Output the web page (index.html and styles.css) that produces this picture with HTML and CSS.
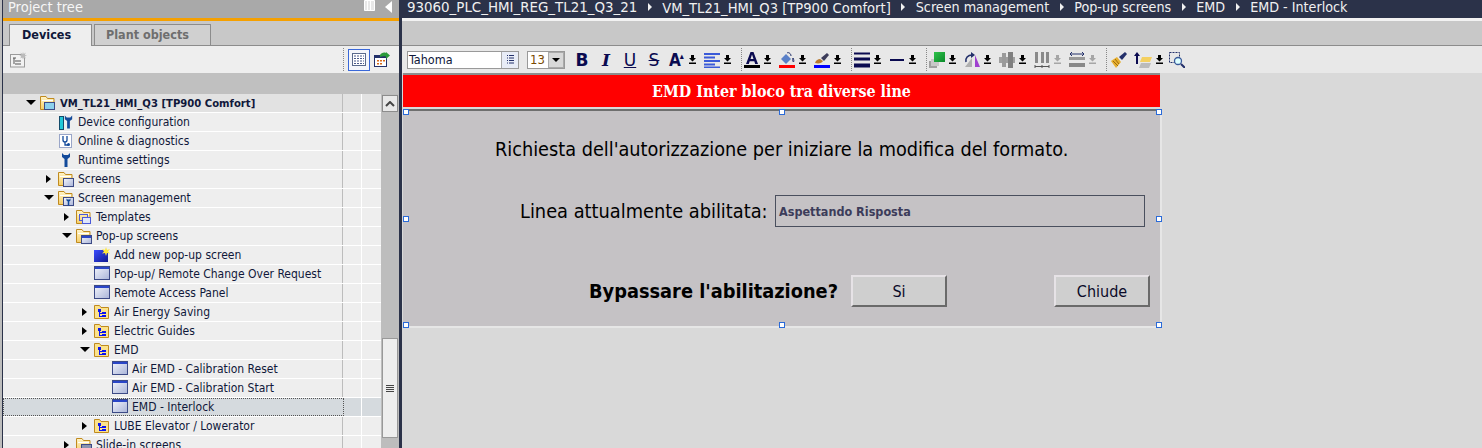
FILE: index.html
```html
<!DOCTYPE html>
<html lang="en">
<head>
<meta charset="utf-8">
<title>Project tree</title>
<link rel="stylesheet" href="styles.css">
</head>
<body>
<svg class="defs" width="0" height="0" aria-hidden="true">
  <defs>
    <linearGradient id="win" x1="0" y1="0" x2="1" y2="1"><stop offset="0" stop-color="#f4f6fc"/><stop offset="1" stop-color="#a9b4d8"/></linearGradient>
    <linearGradient id="blu" x1="0" y1="0" x2="1" y2="1"><stop offset="0" stop-color="#3a4cff"/><stop offset="1" stop-color="#101a90"/></linearGradient>
    <linearGradient id="grn" x1="0" y1="0" x2="1" y2="1"><stop offset="0" stop-color="#2fc24a"/><stop offset="1" stop-color="#0a8a2a"/></linearGradient>
    <linearGradient id="fold" x1="0" y1="0" x2="0" y2="1"><stop offset="0" stop-color="#fff4c8"/><stop offset="1" stop-color="#f6cf6a"/></linearGradient>
    <symbol id="folder" viewBox="0 0 16 16"><path d="M.5 1.500h5.500l1.500 2h6.500v11H.5z" fill="url(#fold)" stroke="#c08a1e"/><path d="M2 5.500h11" stroke="#fff" fill="none"/></symbol>
    <symbol id="window" viewBox="0 0 16 16"><rect x=".5" y=".5" width="15" height="13" fill="url(#win)" stroke="#3c4a86"/><rect x="1" y="1" width="14" height="2" fill="#2a46c8"/></symbol>
    <symbol id="treefold" viewBox="0 0 16 16"><path d="M.5 1.500h5l1.500 2h7.500v11H.5z" fill="#fbe28c" stroke="#c08a1e"/><g fill="#0a12f0"><rect x="4" y="5" width="3" height="3"/><rect x="8" y="8" width="4" height="2"/><rect x="8" y="11" width="4" height="2"/><rect x="5" y="8" width="1" height="5"/><rect x="5" y="9" width="3" height="1"/><rect x="5" y="12" width="3" height="1"/></g></symbol>
    <symbol id="down" viewBox="0 0 7 9"><path d="M2 0h3v3h2L3.500 6.500 0 3h2zM0 7.500h7V9H0z" fill="#000"/></symbol>
    <symbol id="downg" viewBox="0 0 7 9"><path d="M2 0h3v3h2L3.500 6.500 0 3h2zM0 7.500h7V9H0z" fill="#a6a6a6"/></symbol>
    <symbol id="wrench" viewBox="0 0 12 16"><path d="M2 1v4l2.500 2v8h3V7L10 5V1L8 3H4z" fill="#134a9a"/></symbol>
  </defs>
</svg>

<div class="app">
  <aside class="tree-panel">
    <header class="panel-head">
      <span class="panel-title">Project tree</span>
      <svg class="pin" width="11" height="11" viewBox="0 0 11 11"><path d="M.5.5h10v10H.5zM3.500.5v10M6.500.5v10" fill="#e8e8e8" stroke="#fff"/></svg>
      <svg class="collapse" width="7" height="12" viewBox="0 0 7 12"><path d="M7 0v12L0 6z" fill="#fff"/></svg>
    </header>
    <div class="orange"></div>
    <div class="tabs">
      <span class="tab active">Devices</span>
      <span class="tab">Plant objects</span>
    </div>
    <div class="tree-tools">
      <svg class="tt-add" width="17" height="16" viewBox="0 0 17 16"><rect x=".5" y="2.500" width="14" height="12.500" fill="#f2f2f2" stroke="#9a9a9a"/><path d="M3 6h3M5 9h6M5 12h6M4 6v6" stroke="#555"/><path d="M13 0l.8 2 2-1.500-1 2.500 2.200.5-2.200 1 1.200 2-2.200-1-.8 2-.8-2-2 1 1-2-2-1 2.200-.5-1-2.500 2 1.500z" fill="#bbb"/></svg>
      <i class="tt-spacer"></i>
      <i class="tt-sep"></i>
      <span class="tt-btn">
        <svg width="14" height="13" viewBox="0 0 14 13"><rect x=".5" y=".5" width="13" height="12" fill="#fff" stroke="#5a6a8c"/><path d="M2 3h10M2 5.500h10M2 8h10M2 10.500h10" stroke="#4a5a8a" stroke-dasharray="2 1"/></svg>
      </span>
      <svg class="tt-cal" width="17" height="16" viewBox="0 0 17 16"><rect x=".5" y="3.500" width="12" height="11" fill="#fff" stroke="#23306a"/><rect x="1" y="4" width="11" height="2" fill="#23306a"/><path d="M3 8h2v1.500H3zM6 8h2v1.500H6zM9 8h2v1.500H9zM3 11h2v1.500H3zM6 11h2v1.500H6z" fill="#d86a1a"/><path d="M6 3c1-2 4-3 6-2V0l4 3.500-4 3.500V4.500C10 4 8 4 6 5z" fill="#2a9a3a"/></svg>
    </div>
    <div class="tree-band"></div>
    <div class="tree-body">
      <ul class="tree">
        <li class="row top l0"><span class="tw open"></span><svg class="ic"><use href="#folder"/><rect x="4.500" y="7.500" width="10" height="7" fill="#8cd0ec" stroke="#3c4a86"/></svg><b class="lbl">VM_TL21_HMI_Q3 [TP900 Comfort]</b></li>
        <li class="row l1"><span class="tw"></span><svg class="ic"><rect x="1.500" y="2.500" width="4" height="13" fill="#22c8d8" stroke="#134a6a"/><use href="#wrench" x="5" width="11" height="16"/></svg><span class="lbl">Device configuration</span></li>
        <li class="row l1"><span class="tw"></span><svg class="ic"><rect x="1.500" y="1.500" width="12" height="13" fill="#fff" stroke="#9aa6c8"/><path d="M5 3v4a2 2 0 0 0 4 0V3M7 9v3h3" fill="none" stroke="#134a9a" stroke-width="1.300"/><circle cx="10.500" cy="11.500" r="1.500" fill="#134a9a"/></svg><span class="lbl">Online &amp; diagnostics</span></li>
        <li class="row l1"><span class="tw"></span><svg class="ic"><use href="#wrench" x="2" width="12" height="16"/></svg><span class="lbl">Runtime settings</span></li>
        <li class="row l1"><span class="tw shut"></span><svg class="ic"><use href="#folder"/><rect x="5.500" y="7.500" width="10" height="8" fill="url(#win)" stroke="#3c4a86"/></svg><span class="lbl">Screens</span></li>
        <li class="row l1"><span class="tw open"></span><svg class="ic"><use href="#folder"/><rect x="5.500" y="7.500" width="10" height="8" fill="url(#win)" stroke="#3c4a86"/><use href="#wrench" x="7" y="8" width="7" height="8"/></svg><span class="lbl">Screen management</span></li>
        <li class="row l2"><span class="tw shut"></span><svg class="ic"><use href="#folder"/><rect x="3.500" y="5.500" width="8" height="6" fill="none" stroke="#4a5ad8"/><rect x="6.500" y="8.500" width="8" height="6" fill="#dfe6fa" stroke="#4a5ad8"/></svg><span class="lbl">Templates</span></li>
        <li class="row l2"><span class="tw open"></span><svg class="ic"><use href="#folder"/><rect x="5.500" y="7.500" width="10" height="8" fill="url(#win)" stroke="#3c4a86"/><rect x="6" y="8" width="9" height="2" fill="#2a46c8"/></svg><span class="lbl">Pop-up screens</span></li>
        <li class="row l3"><span class="tw"></span><svg class="ic"><rect x="0" y="3" width="14" height="12" fill="url(#blu)"/><path d="M12 0l1 3 3-1-2 2.500 2 2-3-.5-1 3-1-3-3 .5 2-2-2-2.500 3 1z" fill="#ffe83a"/></svg><span class="lbl">Add new pop-up screen</span></li>
        <li class="row l3"><span class="tw"></span><svg class="ic"><use href="#window"/></svg><span class="lbl">Pop-up/ Remote Change Over Request</span></li>
        <li class="row l3"><span class="tw"></span><svg class="ic"><use href="#window"/></svg><span class="lbl">Remote Access Panel</span></li>
        <li class="row l3"><span class="tw shut"></span><svg class="ic"><use href="#treefold"/></svg><span class="lbl">Air Energy Saving</span></li>
        <li class="row l3"><span class="tw shut"></span><svg class="ic"><use href="#treefold"/></svg><span class="lbl">Electric Guides</span></li>
        <li class="row l3"><span class="tw open"></span><svg class="ic"><use href="#treefold"/></svg><span class="lbl">EMD</span></li>
        <li class="row l4"><span class="tw"></span><svg class="ic"><use href="#window"/></svg><span class="lbl">Air EMD - Calibration Reset</span></li>
        <li class="row l4"><span class="tw"></span><svg class="ic"><use href="#window"/></svg><span class="lbl">Air EMD - Calibration Start</span></li>
        <li class="row l4 selected"><span class="tw"></span><svg class="ic"><use href="#window"/></svg><span class="lbl">EMD - Interlock</span></li>
        <li class="row l3"><span class="tw shut"></span><svg class="ic"><use href="#treefold"/></svg><span class="lbl">LUBE Elevator / Lowerator</span></li>
        <li class="row l2"><span class="tw shut"></span><svg class="ic"><use href="#folder"/><rect x="5.500" y="7.500" width="10" height="8" fill="#8a94b0" stroke="#3c4a86"/></svg><span class="lbl">Slide-in screens</span></li>
      </ul>
      <div class="scrollbar">
        <span class="sb-up"><svg width="10" height="6" viewBox="0 0 10 6"><path d="M1 5l4-4 4 4" fill="none" stroke="#444" stroke-width="2"/></svg></span>
        <span class="sb-thumb"><i></i><i></i><i></i><i></i></span>
      </div>
    </div>
  </aside>

  <main class="editor">
    <nav class="crumbs">
      <span class="cr-num">93060_PLC_HMI_REG_TL21_Q3_21</span><i></i>
      <span class="cr-dev">VM_TL21_HMI_Q3 [TP900 Comfort]</span><i></i>
      <span>Screen management</span><i></i>
      <span>Pop-up screens</span><i></i>
      <span>EMD</span><i></i>
      <span>EMD - Interlock</span>
    </nav>
    <div class="crumb-gap"></div>
    <div class="ed-band"></div>
    <div class="format-bar">
      <span class="fontbox"><span class="fb-text">Tahoma</span><span class="fb-btn"><svg width="9" height="11" viewBox="0 0 9 11"><path d="M1 1.500h1M3 1.500h5M1 4h1M3 4h5M1 6.500h1M3 6.500h5M1 9h1M3 9h5" stroke="#23306a"/></svg></span></span>
      <span class="sizebox"><span class="sz-text">13</span><span class="sz-btn"><svg width="8" height="4" viewBox="0 0 8 4"><path d="M0 0h8L4 4z" fill="#000"/></svg></span></span>
      <b class="fmt f-b">B</b><i class="fmt f-i">I</i><u class="fmt f-u">U</u><s class="fmt f-s">S</s>
      <span class="tool first"><span class="glyph-a">A<sup>▴</sup></span><svg class="arr"><use href="#down"/></svg></span>
      <span class="tool"><svg class="t16" viewBox="0 0 16 16"><path d="M0 2h16M0 5.500h11M0 9h16M0 12.500h11M0 15.500h16" stroke="#3a5ad8" stroke-width="2"/></svg><svg class="arr"><use href="#down"/></svg></span>
      <i class="sep"></i>
      <span class="tool"><svg class="t16" viewBox="0 0 16 16"><path d="M6.500 0h3L14 12h-2.800l-.9-2.700H5.700L4.800 12H2zM6.500 7h3L8 2.500z" fill="#0a0a50"/><rect y="13" width="16" height="3" fill="#000"/></svg><svg class="arr"><use href="#down"/></svg></span>
      <span class="tool"><svg class="t16" viewBox="0 0 16 16"><path d="M2 7l5-5 5 5-5 5z" fill="#5a80c8"/><path d="M8 1c1-1 4 0 4 3M14 6c1 2 1 3 .5 4-1-1-1-2-.5-4z" fill="none" stroke="#23306a"/><rect y="13" width="16" height="3" fill="#f00"/></svg><svg class="arr"><use href="#down"/></svg></span>
      <span class="tool"><svg class="t16" viewBox="0 0 16 16"><path d="M1 11c1-3 3-4 5-4l3 2c-1 2-4 3-8 2z" fill="#b87a30"/><path d="M7 6l6-5 2 2-5 6z" fill="#3c3c5a"/><rect y="13" width="16" height="3" fill="#00f"/></svg><svg class="arr"><use href="#down"/></svg></span>
      <i class="sep"></i>
      <span class="tool"><svg class="t16" viewBox="0 0 16 16"><path d="M0 1.500h16" stroke="#0a0a50" stroke-width="2"/><path d="M0 7h16" stroke="#0a0a50" stroke-width="3"/><path d="M0 13.500h16" stroke="#0a0a50" stroke-width="4"/></svg><svg class="arr"><use href="#down"/></svg></span>
      <span class="tool"><svg class="t16" viewBox="0 0 16 16"><path d="M1 8h14" stroke="#0a0a50" stroke-width="2"/></svg><svg class="arr"><use href="#down"/></svg></span>
      <i class="sep"></i>
      <span class="tool"><svg class="t16" viewBox="0 0 16 16"><rect y="9" width="8" height="7" fill="#a0a0a0"/><rect x="2" y="7" width="8" height="7" fill="#c8c8c8"/><rect x="5" y="0" width="11" height="10" fill="url(#grn)"/></svg><svg class="arr"><use href="#down"/></svg></span>
      <span class="tool"><svg class="t16" viewBox="0 0 16 16"><path d="M8 15H1l7-9z" fill="#b0b0b0"/><path d="M11 3l5 12h-5z" fill="#a040d0"/><path d="M2 10c-1-4 2-7 6-7" fill="none" stroke="#23306a" stroke-width="1.600"/><path d="M7 0l4 3-4 3z" fill="#23306a"/></svg><svg class="arr"><use href="#down"/></svg></span>
      <span class="tool"><svg class="t16" viewBox="0 0 16 16"><rect y="5" width="16" height="6" fill="#a0a0a0"/><rect x="3" y="1" width="4" height="14" fill="#9a9a9a"/><rect x="9" y="0" width="5" height="16" fill="#808080"/></svg><svg class="arr"><use href="#down"/></svg></span>
      <span class="tool"><svg class="t16" viewBox="0 0 16 16"><path d="M1 0h3v11H1zM7 0h3v11H7zM12 0h3v11h-3z" fill="#8a8a8a"/><path d="M1 14.500h14M1 13v3M8 13v3M15 13v3" stroke="#555"/></svg><svg class="arr"><use href="#downg"/></svg></span>
      <span class="tool"><svg class="t16" viewBox="0 0 16 16"><rect y="5" width="16" height="3" fill="#999"/><rect y="11" width="16" height="4" fill="#888"/><path d="M1 2h14M1 2l2-2M1 2l2 2M15 2l-2-2M15 2l-2 2" stroke="#23306a"/></svg><svg class="arr"><use href="#downg"/></svg></span>
      <i class="sep"></i>
      <svg class="t16 broom" viewBox="0 0 16 16"><path d="M0 9l6-4 4 5-5 6z" fill="#e8b030"/><path d="M2 9l5 5M4 7l4 5" stroke="#9a6a10"/><path d="M8 5l6-5 2 2-5 6z" fill="#23306a"/></svg>
      <span class="tool order"><svg class="t16 wide" viewBox="0 0 18 16"><path d="M3 0l3 4H4v8H2V4H0z" fill="#0a0a50"/><path d="M8 5h10l-2 5H6z" fill="#f4d060"/><path d="M7 11h10l-2 5H5z" fill="#bbb"/></svg><svg class="arr"><use href="#down"/></svg></span>
      <svg class="t16 zoomico" viewBox="0 0 16 16"><rect x=".5" y=".5" width="10" height="10" fill="none" stroke="#23306a" stroke-dasharray="2 1"/><circle cx="9" cy="9" r="3.500" fill="#dff" stroke="#3a5a9a" stroke-width="1.300"/><path d="M12 12l4 4" stroke="#23306a" stroke-width="2"/></svg>
    </div>

    <section class="canvas">
      <div class="screen">
        <div class="titlebar">EMD Inter bloco tra diverse line</div>
        <div class="popup">
          <p class="msg">Richiesta dell'autorizzazione per iniziare la modifica del formato.</p>
          <div class="line-row">
            <span class="line-lbl">Linea attualmente abilitata:</span>
            <span class="iofield">Aspettando Risposta</span>
          </div>
          <div class="act-row">
            <strong class="ask">Bypassare l'abilitazione?</strong>
            <span class="btn">Si</span>
            <span class="btn btn-end">Chiude</span>
          </div>
          <i class="h h1"></i><i class="h h2"></i><i class="h h3"></i>
          <i class="h h4"></i><i class="h h5"></i>
          <i class="h h6"></i><i class="h h7"></i><i class="h h8"></i>
        </div>
      </div>
    </section>
  </main>
</div>
</body>
</html>
```
FILE: styles.css
```css
* { box-sizing: border-box; }
html, body { margin: 0; height: 100%; overflow: hidden; }
body { font-family: "DejaVu Sans Condensed", "DejaVu Sans", sans-serif; font-size: 12px; color: #10183a; background: #d9d9d9; }
.defs { position: absolute; }
.app { display: flex; height: 448px; padding-left: 2px; background: #bdbdbd; }

/* left panel */
.tree-panel { width: 397px; flex: none; display: flex; flex-direction: column; background: #c0c0c0; border-left: 1px solid #2b3249; }
.panel-head { height: 18px; background: #a9a9a9; display: flex; align-items: flex-start; padding-left: 5px; color: #f6f6f6; font-size: 14.500px; }
.panel-title { flex: 1; line-height: 14px; }
.pin { margin-right: 10px; }
.collapse { margin: 1px 7px 0 0; }
.orange { height: 3px; background: #f5a000; }
.tabs { height: 25px; background: #c8c8c8; display: flex; align-items: flex-end; padding-left: 6px; gap: 1px; border-bottom: 1px solid #8c8c8c; }
.tab { height: 21px; width: 117px; padding: 0 0 2px 11px; font-size: 12.500px; font-weight: bold; color: #6e6e6e; border: 1px solid #8c8c8c; border-bottom: 0; display: flex; align-items: center; background: #d0d0d0; }
.tab.active { width: 83px; height: 22px; margin: 0 1px -1px 0; padding-left: 12px; color: #10183a; background: #eee; }
.tree-tools { height: 27px; background: #eee; display: flex; align-items: center; padding: 0 8px 0 7px; }
.tt-spacer { flex: 1; }
.tt-sep { width: 1px; height: 23px; border-left: 1px dotted #888; margin-right: 4px; }
.tt-btn { width: 22px; height: 22px; border: 1px solid #3a68d8; background: #f4f6fa; display: flex; align-items: center; justify-content: center; margin-right: 4px; }
.tree-band { height: 21px; background: #c0c0c0; }
.tree-body { flex: 1; display: flex; min-height: 0; overflow: hidden; }
.tree { list-style: none; margin: 0; padding: 0; width: 378px; flex: none; }
.row { height: 19px; display: flex; align-items: center; background: #eee; border-bottom: 1px solid #fff; position: relative; font-size: 12px; }
.row::before { content: ""; position: absolute; left: 339px; top: 0; bottom: 0; width: 1px; background: #bcbcbc; }
.row::after { content: ""; position: absolute; left: 358px; top: 0; bottom: 0; width: 1px; background: #fff; }
.row.top { background: #e2e2e2; }
.row.selected { background: #d5dade; }
.row.selected::before { left: 0; width: 339px; background: none; border: 1px dotted #555; }
.l0 { padding-left: 23px; }
.l1 { padding-left: 41px; }
.l2 { padding-left: 59px; }
.l3 { padding-left: 77px; }
.l4 { padding-left: 95px; }
.tw { width: 14px; height: 10px; flex: none; position: relative; }
.tw.open::before { content: ""; position: absolute; left: 0; top: 2px; border-left: 5px solid transparent; border-right: 5px solid transparent; border-top: 5px solid #000; }
.tw.shut::before { content: ""; position: absolute; left: 2px; top: 1px; border-top: 4px solid transparent; border-bottom: 4px solid transparent; border-left: 5px solid #000; }
.ic { width: 16px; height: 16px; flex: none; margin-right: 4px; }
.lbl { font-weight: normal; white-space: nowrap; }
b.lbl { font-weight: bold; font-size: 11.200px; }
.scrollbar { width: 18px; flex: none; background: #bdbdbd; position: relative; }
.sb-up { position: absolute; left: 1px; top: 1px; width: 16px; height: 17px; background: #e8e8e8; border: 1px solid #8c8c8c; display: flex; align-items: center; justify-content: center; }
.sb-thumb { position: absolute; left: 1px; top: 244px; width: 16px; height: 100px; background: #eee; border: 1px solid #999; display: flex; flex-direction: column; align-items: center; justify-content: center; gap: 1px; }
.sb-thumb i { width: 8px; height: 1px; background: #444; }

/* right */
.editor { flex: 1; min-width: 0; display: flex; flex-direction: column; border-left: 3px solid #2b3249; background: #d9d9d9; }
.crumbs { height: 18px; background: #2b3249; color: #f0f0f0; display: flex; gap: 10.500px; padding-left: 5px; align-items: flex-start; font-size: 14.200px; line-height: 15px; }
.crumbs span { white-space: nowrap; }
.crumbs .cr-num { font-size: 14.900px; }
.crumbs .cr-dev { font-size: 14.600px; }
.crumbs i { border-top: 4px solid transparent; border-bottom: 4px solid transparent; border-left: 4px solid #f0f0f0; margin-top: 3px; }
.crumb-gap { height: 3px; background: #f2f2f2; }
.ed-band { height: 24px; background: #c8c8c8; }
.format-bar { height: 28px; background: #e8e8e8; border-top: 1px solid #8c8c8c; display: flex; align-items: center; padding-left: 5px; }
.fontbox { width: 112px; height: 18px; border: 1px solid #999; background: #fff; display: flex; font-size: 12.500px; margin-right: 8px; }
.fb-text { flex: 1; padding-left: 1px; line-height: 16px; }
.fb-btn { width: 17px; background: #e8ecf6; border-left: 1px solid #aaa; display: flex; align-items: center; justify-content: center; }
.sizebox { width: 38px; height: 18px; border: 1px solid #999; background: #fff; display: flex; font-size: 13px; margin-right: 5px; color: #7a4a00; }
.sz-text { flex: 1; padding-left: 2px; line-height: 16px; }
.sz-btn { width: 16px; background: #d8d8d8; border: 1px solid #aaa; display: flex; align-items: center; justify-content: center; }
.fmt { width: 24px; font-size: 17px; line-height: 20px; text-align: center; color: #0a0a50; font-family: "DejaVu Sans", sans-serif; }
.f-i { font-family: "DejaVu Serif", serif; font-weight: bold; }
.tool { display: flex; align-items: center; gap: 4px; width: 35px; flex: none; }
.tool.first { margin-left: 3px; }
.t16 { width: 16px; height: 16px; flex: none; }
.arr { width: 7px; height: 9px; flex: none; }
.glyph-a { width: 16px; font-size: 17px; line-height: 18px; font-weight: bold; color: #0a0a50; white-space: nowrap; letter-spacing: -1px; }
.glyph-a sup { font-size: 9px; line-height: 0; }
.sep { width: 1px; height: 23px; border-left: 1px dotted #888; margin: 0 2px; flex: none; }
.broom { margin: 0 7px 0 2px; }
.order { width: 35px; }
.wide { width: 18px; }
.canvas { flex: 1; background: #d9d9d9; }
.screen { width: 759px; margin-left: 1px; }
.titlebar { height: 34px; margin-right: 2px; background: #f00; border-top: 2px solid #8c8c8c; color: #fff; font: bold 15.900px "DejaVu Serif Condensed", "DejaVu Serif", serif; display: flex; align-items: center; justify-content: center; }
.popup { position: relative; height: 219px; margin-top: 2px; background: #c5c2c5; border-top: 2px solid #6e6e6e; border-right: 2px solid #e6e6e6; border-bottom: 2px solid #e6e6e6; padding-top: 26px; }
.msg { margin: 0 0 0 92px; font-size: 19.700px; color: #000; height: 26px; line-height: 26px; white-space: nowrap; }
.line-row { display: flex; align-items: center; margin-top: 32px; padding-left: 117px; }
.line-lbl { font-size: 19.800px; color: #000; width: 255px; white-space: nowrap; }
.iofield { width: 370px; height: 32px; border: 1px solid #4a4f5e; font-size: 12.500px; font-weight: bold; color: #3c3c5a; display: flex; align-items: center; padding-left: 3px; }
.act-row { display: flex; align-items: center; margin-top: 48px; padding-left: 186px; }
.ask { font-size: 19.800px; font-weight: bold; color: #000; width: 262px; white-space: nowrap; }
.btn { width: 96px; height: 32px; background: #cfcfcf; border: 2px solid; border-color: #e6e2e6 #6a6a6a #6a6a6a #e6e2e6; display: flex; align-items: center; justify-content: center; font-size: 16px; color: #0a0a28; }
.btn-end { margin-left: 107px; }
.h { position: absolute; width: 6px; height: 6px; border: 1px solid #2a6ad8; background: #fff; }
.h1 { left: 0; top: -2px; }
.h2 { left: 376px; top: -2px; }
.h3 { left: 753px; top: -2px; }
.h4 { left: 0; top: 105px; }
.h5 { left: 753px; top: 105px; }
.h6 { left: 0; top: 211px; }
.h7 { left: 376px; top: 211px; }
.h8 { left: 753px; top: 211px; }
```
